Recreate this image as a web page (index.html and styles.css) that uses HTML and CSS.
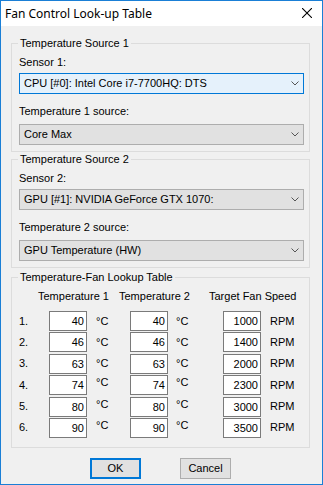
FILE: index.html
```html
<!DOCTYPE html>
<html>
<head>
<meta charset="utf-8">
<title>Fan Control Look-up Table</title>
<link rel="stylesheet" href="styles.css">
</head>
<body>
<div class="window">
  <div class="titlebar">
    <span class="title">Fan Control Look-up Table</span>
    <svg class="close" width="10" height="10" viewBox="0 0 10 10"><path d="M0 0L10 10M10 0L0 10" stroke="#000" stroke-width="1.1" fill="none"/></svg>
  </div>
  <div class="content">
    <div class="group">
      <span class="legend">Temperature Source 1</span>
      <div class="label">Sensor 1:</div>
      <div class="combo focused"><span>CPU [#0]: Intel Core i7-7700HQ: DTS</span><svg class="chev" width="8" height="5" viewBox="0 0 8 5"><polyline points="0.5,0.5 4,4 7.5,0.5" fill="none" stroke="#555" stroke-width="1"/></svg></div>
      <div class="label second">Temperature 1 source:</div>
      <div class="combo second"><span>Core Max</span><svg class="chev" width="8" height="5" viewBox="0 0 8 5"><polyline points="0.5,0.5 4,4 7.5,0.5" fill="none" stroke="#555" stroke-width="1"/></svg></div>
    </div>
    <div class="group g2">
      <span class="legend">Temperature Source 2</span>
      <div class="label">Sensor 2:</div>
      <div class="combo"><span>GPU [#1]: NVIDIA GeForce GTX 1070:</span><svg class="chev" width="8" height="5" viewBox="0 0 8 5"><polyline points="0.5,0.5 4,4 7.5,0.5" fill="none" stroke="#555" stroke-width="1"/></svg></div>
      <div class="label second">Temperature 2 source:</div>
      <div class="combo second"><span>GPU Temperature (HW)</span><svg class="chev" width="8" height="5" viewBox="0 0 8 5"><polyline points="0.5,0.5 4,4 7.5,0.5" fill="none" stroke="#555" stroke-width="1"/></svg></div>
    </div>
    <div class="group g3">
      <span class="legend">Temperature-Fan Lookup Table</span>
      <div class="headers">
        <span class="h1">Temperature 1</span>
        <span class="h2">Temperature 2</span>
        <span class="h3">Target Fan Speed</span>
      </div>
      <div class="table">
        <span class="num">1.</span><span class="edit">40</span><span class="unit">°C</span><span class="edit">40</span><span class="unit u2">°C</span><span class="edit">1000</span><span class="unit">RPM</span>
        <span class="num">2.</span><span class="edit">46</span><span class="unit">°C</span><span class="edit">46</span><span class="unit u2">°C</span><span class="edit">1400</span><span class="unit">RPM</span>
        <span class="num">3.</span><span class="edit">63</span><span class="unit">°C</span><span class="edit">63</span><span class="unit u2">°C</span><span class="edit">2000</span><span class="unit">RPM</span>
        <span class="num">4.</span><span class="edit">74</span><span class="unit high">°C</span><span class="edit">74</span><span class="unit u2 high">°C</span><span class="edit">2300</span><span class="unit">RPM</span>
        <span class="num">5.</span><span class="edit">80</span><span class="unit high">°C</span><span class="edit">80</span><span class="unit u2 high">°C</span><span class="edit">3000</span><span class="unit">RPM</span>
        <span class="num">6.</span><span class="edit">90</span><span class="unit high">°C</span><span class="edit">90</span><span class="unit u2 high">°C</span><span class="edit">3500</span><span class="unit">RPM</span>
      </div>
    </div>
    <div class="buttons">
      <button class="btn default">OK</button>
      <button class="btn">Cancel</button>
    </div>
  </div>
</div>
</body>
</html>
```
FILE: styles.css
```css
html, body {
  margin: 0;
  padding: 0;
  background: #fff;
}
.window {
  width: 323px;
  height: 485px;
  box-sizing: border-box;
  border: 1px solid #1a7fd6;
  background: #f0f0f0;
  display: flex;
  flex-direction: column;
  font-family: "Liberation Sans", Arial, sans-serif;
  font-size: 11px;
  line-height: 13px;
  color: #000;
}
.titlebar {
  height: 25px;
  background: #fff;
  display: flex;
  align-items: center;
  justify-content: space-between;
  padding: 0 10px 0 4px;
  flex: none;
}
.title {
  font-family: "Noto Sans", "Open Sans", sans-serif;
  font-size: 12px;
  line-height: 16px;
}
.close {
  display: block;
  margin-top: -1px;
}
.content {
  padding: 17px 12px 0 10px;
  display: flex;
  flex-direction: column;
}
.group {
  position: relative;
  border: 1px solid #dcdcdc;
  padding: 12px 5px 6px 7px;
  display: flex;
  flex-direction: column;
}
.g2 {
  margin-top: 7px;
}
.g3 {
  margin-top: 9px;
  padding-bottom: 9px;
}
.legend {
  position: absolute;
  top: -7px;
  left: 6px;
  padding: 0 2px;
  background: #f0f0f0;
  white-space: nowrap;
}
.label {
  height: 13px;
}
.label.second {
  margin-top: 11px;
}
.combo {
  margin-top: 4px;
  height: 21px;
  box-sizing: border-box;
  border: 1px solid #adadad;
  background: #e1e1e1;
  display: flex;
  align-items: center;
  justify-content: space-between;
  padding: 0 4px 0 4px;
  white-space: nowrap;
}
.combo.second {
  margin-top: 6px;
}
.combo.focused {
  border-color: #0078d7;
  background: #e5f1fb;
}
.chev {
  display: block;
}
.headers {
  display: flex;
  padding-left: 19px;
  height: 13px;
  white-space: nowrap;
}
.h1 {
  width: 81px;
}
.h2 {
  width: 90px;
}
.table {
  margin-top: 8px;
  display: grid;
  grid-template-columns: 30px 38px 43px 38px 55px 38px auto;
  grid-auto-rows: 20px;
  row-gap: 1.4px;
  align-items: center;
}
.edit {
  height: 20px;
  box-sizing: border-box;
  border: 1px solid #7a7a7a;
  background: #fff;
  text-align: right;
  padding: 3px 2px 0 0;
}
.unit {
  padding-left: 9px;
}
.unit.u2 {
  padding-left: 8px;
}
.unit.high {
  align-self: start;
  margin-top: 1px;
}
.buttons {
  margin-top: 10px;
  display: flex;
  justify-content: center;
  gap: 39px;
}
.btn {
  width: 51px;
  height: 21px;
  box-sizing: border-box;
  border: 1px solid #adadad;
  background: #e1e1e1;
  font-family: "Liberation Sans", Arial, sans-serif;
  font-size: 11px;
  color: #000;
  padding: 0;
  margin: 0;
}
.btn.default {
  border: 2px solid #0078d7;
}
```
